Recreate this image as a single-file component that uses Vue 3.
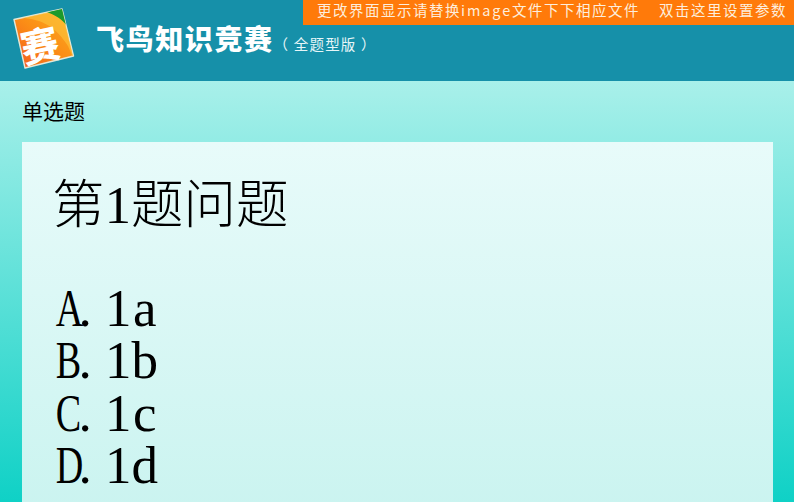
<script setup>
const options = [
  { cap: 'A', rest: '1a' },
  { cap: 'B', rest: '1b' },
  { cap: 'C', rest: '1c' },
  { cap: 'D', rest: '1d' },
]
</script>

<template>
  <div class="page">
    <header class="header">
      <svg class="logo" viewBox="0 0 76 72" aria-hidden="true">
        <defs>
          <linearGradient id="logoFill" x1="0.1" y1="0.95" x2="0.85" y2="0.1">
            <stop offset="0" stop-color="#f5611c" />
            <stop offset="0.55" stop-color="#fb8f16" />
            <stop offset="1" stop-color="#fba81f" />
          </linearGradient>
          <clipPath id="logoClip">
            <polygon points="14,19.5 62,9 73.5,56 25,68" />
          </clipPath>
        </defs>
        <polygon points="14,19.5 62,9 73.5,56 25,68" fill="url(#logoFill)" stroke="#e3e8d8" stroke-width="1.4" stroke-linejoin="round" />
        <g clip-path="url(#logoClip)">
          <path d="M22 18 C42 19 56 27 68 46 L74 60 L62 9 Z" fill="#fdc53c" opacity="0.6" />
          <path d="M47 12 L63 8 L67 26 C62 19 55 15 47 12Z" fill="#1c9a2c" />
        </g>
        <text x="40" y="60" class="logo-char" transform="rotate(-12 40 46)">赛</text>
      </svg>
      <div class="brand">
        <h1 class="name">飞鸟知识竞赛</h1>
        <span class="edition">（ 全题型版 ）</span>
      </div>
      <div class="notice">
        <span>更改界面显示请替换<span class="wide">image</span>文件下下相应文件</span>
        <span>双击这里设置参数</span>
      </div>
    </header>

    <main class="main">
      <p class="kind">单选题</p>
      <section class="card">
        <h2 class="question">第<span class="cell">1</span>题问题</h2>
        <ul class="options">
          <li v-for="option in options" :key="option.cap" class="option">
            <span class="cell cap">{{ option.cap }}</span><span class="cell dot">.</span><span
              v-for="ch in option.rest" :key="ch" class="cell">{{ ch }}</span>
          </li>
        </ul>
      </section>
    </main>
  </div>
</template>

<style>
html, body { margin: 0; overflow: hidden; }
</style>

<style scoped>
.page {
  width: 794px;
  height: 502px;
  overflow: hidden;
  display: flex;
  flex-direction: column;
  font-family: "Noto Sans CJK SC", sans-serif;
}
.header {
  position: relative;
  flex: 0 0 81px;
  display: flex;
  align-items: center;
  background: #1690a9;
}
.logo {
  flex: none;
  width: 76px;
  height: 72px;
  margin-bottom: 9px;
}
.logo-char {
  font: 900 38px "Noto Sans CJK SC", sans-serif;
  fill: #fff;
  text-anchor: middle;
}
.brand {
  display: flex;
  align-items: baseline;
  margin: 0 0 5px 20px;
  color: #fff;
}
.name {
  margin: 0;
  font-size: 28px;
  font-weight: 900;
  letter-spacing: 1.6px;
  line-height: 36px;
}
.edition {
  font-size: 14.5px;
  letter-spacing: 1.2px;
  color: #e6f6f8;
  white-space: pre;
}
.notice {
  position: absolute;
  top: 0;
  right: 0;
  box-sizing: border-box;
  width: 491px;
  height: 25px;
  padding: 0 7px 7px 14px;
  display: flex;
  justify-content: space-between;
  align-items: center;
  background: #ff7a0a;
  color: #fdeedd;
  font-size: 14.5px;
  letter-spacing: 1.5px;
  white-space: nowrap;
}
.wide {
  letter-spacing: 1.9px;
}
.main {
  flex: 1;
  min-height: 0;
  padding: 0 21px 0 22px;
  background: linear-gradient(180deg, #a9f0ea 0%, #0fd1c6 100%);
}
.kind {
  margin: 0;
  padding-top: 16px;
  height: 45px;
  font-size: 21px;
  line-height: 27px;
  color: #000;
}
.card {
  height: 400px;
  box-sizing: border-box;
  padding: 28px 30px;
  background: linear-gradient(180deg, #e8fbfa 0%, #c8f3ef 100%);
  color: #000;
}
.question {
  margin: 0 0 47px;
  font-size: 52.5px;
  font-weight: 300;
  line-height: 60px;
  white-space: nowrap;
}
.cell {
  display: inline-block;
  width: 26.5px;
  font-family: "Liberation Serif", serif;
  font-weight: 400;
  text-align: center;
}
.cap {
  transform: scaleX(0.72);
}
.dot {
  text-align: left;
}
.options {
  margin: 0;
  padding: 0;
  list-style: none;
  font-size: 53px;
}
.option {
  display: flex;
  height: 52.3px;
  line-height: 52.3px;
  white-space: nowrap;
}
</style>
